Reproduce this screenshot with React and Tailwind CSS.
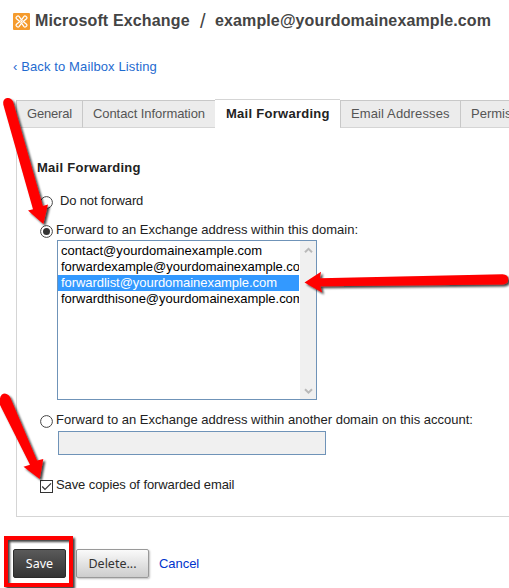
import React from 'react';

const ADDRESSES = [
  { text: 'contact@yourdomainexample.com', track: 'tracking-[0.03px]' },
  { text: 'forwardexample@yourdomainexample.com', track: 'tracking-[-0.03px]' },
  { text: 'forwardlist@yourdomainexample.com', track: 'tracking-[-0.05px]', selected: true },
  { text: 'forwardthisone@yourdomainexample.com', track: 'tracking-[-0.03px]' },
];

function ExchangeIcon() {
  return (
    <svg className="h-[17px] w-[17px] shrink-0" viewBox="0 0 17 17" fill="none">
      <rect width="17" height="17" rx="1" fill="#f59b2d" />
      <path
        stroke="#fff"
        strokeWidth="1.3"
        d="M8.5 6.8 6 3.4Q5.2 2.600 4.200 3.200L3.300 4.100Q2.600 5 3.500 5.800L6.800 8.500 3.500 11.200Q2.600 12 3.300 12.900L4.200 13.800Q5.200 14.400 6 13.600L8.500 10.200 11 13.600Q11.800 14.400 12.800 13.800L13.700 12.900Q14.400 12 13.500 11.200L10.200 8.500 13.500 5.800Q14.400 5 13.700 4.100L12.800 3.200Q11.800 2.600 11 3.400Z"
      />
      <path stroke="#fff" strokeWidth="0.9" d="m7.200 7.200 2.600 2.600M9.800 7.200 7.200 9.800" />
    </svg>
  );
}

function Radio({ checked }) {
  return (
    <svg className="mt-[3px] h-[13px] w-[13px] shrink-0" viewBox="0 0 13 13">
      <circle cx="6.5" cy="6.5" r="5.9" fill="#fff" stroke="#444" strokeWidth="1" />
      {checked && <circle cx="6.5" cy="6.5" r="3.5" fill="#333" />}
    </svg>
  );
}

function Chevron({ down }) {
  return (
    <svg className="h-[7px] w-[9px]" viewBox="0 0 9 7" fill="none" stroke="#b9b9b9" strokeWidth="2">
      <path d={down ? 'M1 1.2 4.5 4.7 8 1.2' : 'M1 5.3 4.5 1.8 8 5.3'} />
    </svg>
  );
}

function Annotations() {
  return (
    <svg className="pointer-events-none absolute inset-0 h-[588px] w-[509px]" viewBox="0 0 509 588">
      <defs>
        <filter id="shadow" x="-20%" y="-30%" width="150%" height="170%">
          <feDropShadow dx="2" dy="2" stdDeviation="1.3" floodColor="#000" floodOpacity="0.75" />
        </filter>
      </defs>
      <g fill="#f00" filter="url(#shadow)">
        <path d="M3.3 104.5Q2.4 99 7 98Q11 97.3 13 101.5L42.8 206L48 204.5L43.3 224L28 210.5L33 209.200Z" />
        <path d="M304.5 282.5L321 271.8L320 278.2L502.5 274.3Q508.500 274.500 508.200 279.500Q508 284 502.500 284.500L320.500 286.300L322 292.500Z" />
        <path d="M0 402Q-1 395 4 393.500Q8 393.500 10 397L37 460.500L43.300 459L39.700 479L23.500 466.700L30 464.700L0 405Z" />
      </g>
      <rect x="6" y="538" width="65" height="47" fill="none" stroke="#f00" strokeWidth="4" filter="url(#shadow)" />
    </svg>
  );
}

export default function App() {
  return (
    <div className="relative h-[588px] w-[509px] overflow-hidden bg-white font-['Liberation_Sans',Arial,sans-serif] text-[13px] leading-[16px] text-[#222]">
      <header className="flex h-[42px] items-center pl-[13px] text-[16px] font-bold text-[#444]">
        <ExchangeIcon />
        <h1 className="ml-[5px] w-[165px] whitespace-nowrap tracking-[0.15px]">Microsoft Exchange</h1>
        <span className="w-[15px] text-[20px] font-normal">/</span>
        <span className="whitespace-nowrap tracking-[0.12px]">example@yourdomainexample.com</span>
      </header>

      <a className="ml-[13px] mt-[17px] block h-[16px] w-max tracking-[0.12px] text-[#1f6bd0]">‹ Back to Mailbox Listing</a>

      <nav className="ml-[16px] mt-[24px] flex h-[29px] w-[560px] items-end text-[#555]">
        <div className="flex h-[28px] w-[67px] shrink-0 items-center border border-[#c8c8c8] border-b-[#d5d5d5] bg-[#ececec] pl-[10px] tracking-[-0.2px]">General</div>
        <div className="flex h-[28px] w-[132px] shrink-0 items-center border-y border-[#c8c8c8] border-b-[#d5d5d5] bg-[#ececec] pl-[10px] tracking-[-0.08px] whitespace-nowrap">Contact Information</div>
        <div className="flex h-[29px] w-[125px] shrink-0 items-center border-t border-[#d5d5d5] bg-white pb-[1px] pl-[11px] font-bold tracking-[0.27px] whitespace-nowrap text-[#222]">Mail Forwarding</div>
        <div className="flex h-[28px] w-[121px] shrink-0 items-center border border-[#c8c8c8] border-b-[#d5d5d5] bg-[#ececec] pl-[10px] tracking-[0.12px] whitespace-nowrap">Email Addresses</div>
        <div className="flex h-[28px] w-[115px] shrink-0 items-center border-y border-[#c8c8c8] border-b-[#d5d5d5] bg-[#ececec] pl-[10px]">Permissions</div>
      </nav>

      <main className="ml-[16px] h-[389px] w-[560px] border-b border-l border-[#d5d5d5] pl-[20px] pt-[32px]">
        <h2 className="h-[16px] font-bold tracking-[0.27px] whitespace-nowrap">Mail Forwarding</h2>

        <div className="ml-[3px] mt-[17px] flex h-[16px] gap-[7px]">
          <Radio />
          <span className="tracking-[-0.15px]">Do not forward</span>
        </div>

        <div className="ml-[3px] mt-[13px] flex h-[16px] gap-[3px] whitespace-nowrap">
          <Radio checked />
          <span>Forward to an Exchange address within this domain:</span>
        </div>

        <div className="ml-[20px] mt-[2px] flex h-[160px] w-[260px] border border-[#6f93b8] bg-white text-black">
          <div className="w-[241px] overflow-hidden pt-[2px]">
            {ADDRESSES.map((a) => (
              <div
                key={a.text}
                className={`h-[16px] overflow-hidden pl-[3px] whitespace-nowrap ${a.track} ${a.selected ? 'bg-[#3399ff] text-white' : ''}`}
              >
                {a.text}
              </div>
            ))}
          </div>
          <div className="ml-[1px] flex w-[16px] flex-col items-center justify-between bg-[#f0f0f0] pb-[4px] pt-[6px]">
            <Chevron />
            <Chevron down />
          </div>
        </div>

        <div className="ml-[3px] mt-[12px] flex h-[16px] gap-[3px] whitespace-nowrap">
          <Radio />
          <span>Forward to an Exchange address within another domain on this account:</span>
        </div>
        <div className="ml-[21px] mt-[3px] h-[24px] w-[268px] border border-[#6f93b8] bg-[#f0f0f0]" />

        <div className="ml-[3px] mt-[22px] flex h-[16px] gap-[3px] whitespace-nowrap">
          <svg className="mt-[3px] h-[13px] w-[13px] shrink-0" viewBox="0 0 13 13" fill="none">
            <rect x="0.5" y="0.5" width="12" height="12" fill="#fff" stroke="#333" />
            <path d="M2.2 6.5 5 9.5 11 3.3" stroke="#333" strokeWidth="1.2" />
          </svg>
          <span className="tracking-[-0.1px]">Save copies of forwarded email</span>
        </div>
      </main>

      <footer className="ml-[13px] mt-[32px] flex h-[29px] items-center font-['Noto_Sans','Open_Sans',sans-serif]">
        <button className="h-[29px] w-[53px] rounded-[2px] border border-[#2b2b2b] bg-linear-to-b from-[#5a5a5a] to-[#343434] text-[12.5px] text-white">Save</button>
        <button className="ml-[10px] h-[29px] w-[73px] rounded-[2px] border border-[#999] bg-linear-to-b from-[#fafafa] to-[#cdcdcd] text-[12.5px] text-[#333] shadow-[1px_1px_2px_rgba(0,0,0,0.25)]">Delete...</button>
        <a className="ml-[10px] font-['Liberation_Sans',Arial,sans-serif] tracking-[-0.05px] text-[#0033cc]">Cancel</a>
      </footer>

      <Annotations />
    </div>
  );
}
